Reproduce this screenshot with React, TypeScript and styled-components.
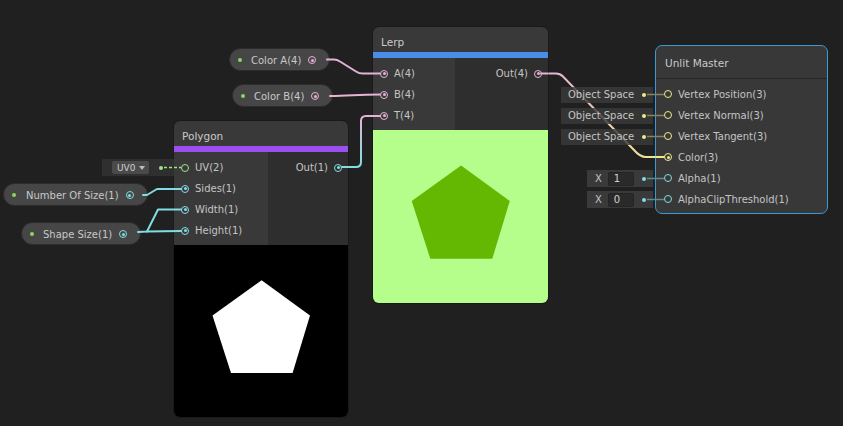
import React from 'react';
import styled, { createGlobalStyle } from 'styled-components';

const PINK = '#e6b2d6';
const CYAN = '#82dde2';
const YELLOW = '#efeb8a';
const GREEN = '#9ce57f';

const GlobalStyle = createGlobalStyle`
  html, body { margin: 0; padding: 0; background: #202020; }
  body { font-family: "DejaVu Sans", "Liberation Sans", sans-serif; }
`;

const Canvas = styled.div`
  position: relative;
  width: 843px;
  height: 426px;
  overflow: hidden;
  background: #202020;
  font-family: "DejaVu Sans", "Liberation Sans", sans-serif;
  font-size: 10px;
  color: #c4c4c4;
`;

const WireLayer = styled.svg<{ $z: number }>`
  position: absolute;
  left: 0;
  top: 0;
  width: 843px;
  height: 426px;
  pointer-events: none;
  z-index: ${(p) => p.$z};
`;

const Node = styled.div<{ $x: number; $y: number; $w: number }>`
  position: absolute;
  left: ${(p) => p.$x}px;
  top: ${(p) => p.$y}px;
  width: ${(p) => p.$w}px;
  display: flex;
  flex-direction: column;
  background: #393939;
  border-radius: 6px;
  overflow: hidden;
  box-shadow: 0 0 0 1px #1a1a1a;
  z-index: 1;
`;

const Title = styled.div`
  height: 25px;
  box-sizing: border-box;
  padding: 4px 8px 0;
  display: flex;
  align-items: center;
  font-size: 10.5px;
  color: #c9c9c9;
`;

const ColorBar = styled.div<{ $color: string }>`
  height: 6px;
  background: ${(p) => p.$color};
`;

const Ports = styled.div<{ $inWidth: number }>`
  display: grid;
  grid-template-columns: ${(p) => p.$inWidth}px 1fr;
`;

const InputColumn = styled.div`
  display: flex;
  flex-direction: column;
  padding: 5px 0 4px;
  background: #393939;
`;

const OutputColumn = styled.div`
  display: flex;
  flex-direction: column;
  padding: 5px 0 4px;
  background: #2e2e2e;
`;

const PortRow = styled.div<{ $out?: boolean }>`
  height: 21px;
  display: flex;
  align-items: center;
  gap: 6px;
  justify-content: ${(p) => (p.$out ? 'flex-end' : 'flex-start')};
  padding: ${(p) => (p.$out ? '0 6px 0 0' : '0 0 0 7px')};
  white-space: nowrap;
`;

const Port = styled.span<{ $color: string; $filled?: boolean }>`
  position: relative;
  flex: none;
  width: 8px;
  height: 8px;
  box-sizing: border-box;
  border-radius: 50%;
  border: 1.5px solid ${(p) => p.$color};
  &::after {
    content: '';
    display: ${(p) => (p.$filled ? 'block' : 'none')};
    position: absolute;
    left: 50%;
    top: 50%;
    width: 3px;
    height: 3px;
    margin: -1.5px 0 0 -1.5px;
    border-radius: 50%;
    background: ${(p) => p.$color};
  }
`;

const Preview = styled.div<{ $bg: string; $h: number }>`
  height: ${(p) => p.$h}px;
  background: ${(p) => p.$bg};
  display: flex;
  svg { width: 100%; height: 100%; display: block; }
`;

const Pill = styled.div<{ $x: number; $y: number }>`
  position: absolute;
  left: ${(p) => p.$x}px;
  top: ${(p) => p.$y}px;
  height: 23px;
  box-sizing: border-box;
  padding: 1px 13px 0 8px;
  display: flex;
  align-items: center;
  background: #464646;
  border: 1px solid #2c2c2c;
  border-radius: 11.5px;
  white-space: nowrap;
  color: #c8c8c8;
  z-index: 1;
`;

const PillDot = styled.span`
  flex: none;
  width: 4px;
  height: 4px;
  border-radius: 50%;
  background: #8ed65e;
`;

const PillLabel = styled.span<{ $gap: number }>`
  margin: 0 7px 0 ${(p) => p.$gap}px;
`;

const UvBox = styled.div`
  position: absolute;
  left: 102px;
  top: 159px;
  width: 72px;
  height: 17px;
  box-sizing: border-box;
  padding-left: 10px;
  display: flex;
  align-items: center;
  background: #2f2f2f;
  z-index: 1;
`;

const UvButton = styled.div`
  width: 37px;
  height: 13px;
  box-sizing: border-box;
  padding: 0 4px 0 5px;
  display: flex;
  align-items: center;
  justify-content: space-between;
  background: #4a4a4a;
  border-radius: 2px;
  color: #d0d0d0;
  font-size: 9px;
`;

const Caret = styled.span`
  width: 0;
  height: 0;
  border-left: 3.5px solid transparent;
  border-right: 3.5px solid transparent;
  border-top: 4px solid #bdbdbd;
`;

const SlotDot = styled.span<{ $color: string }>`
  flex: none;
  width: 4px;
  height: 4px;
  border-radius: 50%;
  background: ${(p) => p.$color};
  margin: 0 7px 0 auto;
`;

const UvDot = styled(SlotDot)`
  margin: 0 0 0 auto;
  position: relative;
  left: -11px;
`;

const MasterNode = styled.div`
  position: absolute;
  left: 655px;
  top: 45px;
  width: 173px;
  height: 169px;
  box-sizing: border-box;
  border: 1.5px solid #3a99d6;
  border-radius: 7px;
  background: #383838;
  display: flex;
  flex-direction: column;
  z-index: 1;
`;

const MasterTitle = styled.div`
  flex: none;
  height: 33px;
  box-sizing: border-box;
  padding: 2px 9px 0;
  display: flex;
  align-items: center;
  border-bottom: 1px solid #272727;
  font-size: 10.5px;
  color: #c9c9c9;
`;

const MasterRows = styled.div`
  display: flex;
  flex-direction: column;
  padding-top: 4.5px;
`;

const MasterRow = styled.div`
  height: 21px;
  display: flex;
  align-items: center;
  gap: 6px;
  padding-left: 8px;
  white-space: nowrap;
`;

const SlotColumn = styled.div`
  position: absolute;
  left: 553px;
  top: 84px;
  width: 100px;
  display: flex;
  flex-direction: column;
  z-index: 1;
`;

const SlotRow = styled.div`
  height: 21px;
  display: flex;
  align-items: center;
  justify-content: flex-end;
`;

const SpaceField = styled.div`
  width: 92px;
  height: 16px;
  box-sizing: border-box;
  padding-left: 7px;
  display: flex;
  align-items: center;
  background: rgba(59, 59, 59, 0.82);
  color: #c4c4c4;
  white-space: nowrap;
`;

const VectorField = styled.div`
  width: 66px;
  height: 17px;
  box-sizing: border-box;
  padding-left: 8px;
  display: flex;
  align-items: center;
  background: #3a3a3a;
  color: #c4c4c4;
`;

const NumberInput = styled.div`
  margin-left: 6px;
  width: 26px;
  height: 14px;
  box-sizing: border-box;
  padding-left: 5px;
  display: flex;
  align-items: center;
  background: #2a2a2a;
  border: 1px solid #242424;
  border-radius: 2px;
  color: #d2d2d2;
`;

type Row = { label: string; color: string; filled?: boolean };

function Pentagon({ fill }: { fill: string }) {
  return (
    <svg viewBox="0 0 174 173" preserveAspectRatio="none">
      <polygon points="87.6,35.5 136,71 118.6,128.8 57,128.8 38.5,71" fill={fill} />
    </svg>
  );
}

function ShaderNode(props: {
  x: number;
  y: number;
  w: number;
  title: string;
  bar: string;
  inWidth: number;
  inputs: Row[];
  outputs: Row[];
  previewBg: string;
  previewH: number;
  shape: string;
}) {
  return (
    <Node $x={props.x} $y={props.y} $w={props.w}>
      <Title>{props.title}</Title>
      <ColorBar $color={props.bar} />
      <Ports $inWidth={props.inWidth}>
        <InputColumn>
          {props.inputs.map((r) => (
            <PortRow key={r.label}>
              <Port $color={r.color} $filled={r.filled} />
              <span>{r.label}</span>
            </PortRow>
          ))}
        </InputColumn>
        <OutputColumn>
          {props.outputs.map((r) => (
            <PortRow key={r.label} $out>
              <span>{r.label}</span>
              <Port $color={r.color} $filled={r.filled} />
            </PortRow>
          ))}
        </OutputColumn>
      </Ports>
      <Preview $bg={props.previewBg} $h={props.previewH}>
        <Pentagon fill={props.shape} />
      </Preview>
    </Node>
  );
}

const pills = [
  { x: 229, y: 48, label: 'Color A(4)', color: PINK, gap: 9 },
  { x: 232, y: 84, label: 'Color B(4)', color: PINK, gap: 9 },
  { x: 3, y: 183, label: 'Number Of Size(1)', color: CYAN, gap: 10 },
  { x: 21, y: 222, label: 'Shape Size(1)', color: CYAN, gap: 9 },
];

const masterRows: Row[] = [
  { label: 'Vertex Position(3)', color: YELLOW },
  { label: 'Vertex Normal(3)', color: YELLOW },
  { label: 'Vertex Tangent(3)', color: YELLOW },
  { label: 'Color(3)', color: YELLOW, filled: true },
  { label: 'Alpha(1)', color: CYAN },
  { label: 'AlphaClipThreshold(1)', color: CYAN },
];

export default function App() {
  return (
    <>
      <GlobalStyle />
      <Canvas>
        <WireLayer $z={0} viewBox="0 0 843 426">
          <defs>
            <linearGradient id="lerpColor" gradientUnits="userSpaceOnUse" x1="548" y1="0" x2="664" y2="0">
              <stop offset="0" stopColor={PINK} />
              <stop offset="1" stopColor={YELLOW} />
            </linearGradient>
          </defs>
          <path
            d="M541,73.5 L556,73.5 Q560,73.5 563,76.5 L634,150 Q640,157 646,157 L664,157"
            fill="none"
            stroke="url(#lerpColor)"
            strokeWidth="2"
          />
        </WireLayer>

        <ShaderNode
          x={174}
          y={121}
          w={174}
          title="Polygon"
          bar="#9b4ff0"
          inWidth={94}
          inputs={[
            { label: 'UV(2)', color: GREEN },
            { label: 'Sides(1)', color: CYAN, filled: true },
            { label: 'Width(1)', color: CYAN, filled: true },
            { label: 'Height(1)', color: CYAN, filled: true },
          ]}
          outputs={[{ label: 'Out(1)', color: CYAN, filled: true }]}
          previewBg="#000000"
          previewH={172}
          shape="#ffffff"
        />

        <ShaderNode
          x={373}
          y={27}
          w={175}
          title="Lerp"
          bar="#4a8de8"
          inWidth={82}
          inputs={[
            { label: 'A(4)', color: PINK, filled: true },
            { label: 'B(4)', color: PINK, filled: true },
            { label: 'T(4)', color: PINK, filled: true },
          ]}
          outputs={[{ label: 'Out(4)', color: PINK, filled: true }]}
          previewBg="#b5fe8b"
          previewH={173}
          shape="#64b802"
        />

        {pills.map((p) => (
          <Pill key={p.label} $x={p.x} $y={p.y}>
            <PillDot />
            <PillLabel $gap={p.gap}>{p.label}</PillLabel>
            <Port $color={p.color} $filled />
          </Pill>
        ))}

        <UvBox>
          <UvButton>
            <span>UV0</span>
            <Caret />
          </UvButton>
          <UvDot $color={GREEN} />
        </UvBox>

        <SlotColumn>
          {[0, 1, 2].map((i) => (
            <SlotRow key={i}>
              <SpaceField>
                Object Space
                <SlotDot $color={YELLOW} />
              </SpaceField>
            </SlotRow>
          ))}
          <SlotRow />
          {['1', '0'].map((v) => (
            <SlotRow key={v}>
              <VectorField>
                X
                <NumberInput>{v}</NumberInput>
                <SlotDot $color={CYAN} />
              </VectorField>
            </SlotRow>
          ))}
        </SlotColumn>

        <MasterNode>
          <MasterTitle>Unlit Master</MasterTitle>
          <MasterRows>
            {masterRows.map((r) => (
              <MasterRow key={r.label}>
                <Port $color={r.color} $filled={r.filled} />
                <span>{r.label}</span>
              </MasterRow>
            ))}
          </MasterRows>
        </MasterNode>

        <WireLayer $z={3} viewBox="0 0 843 426">
          <defs>
            <linearGradient id="outToT" gradientUnits="userSpaceOnUse" x1="0" y1="167" x2="0" y2="116">
              <stop offset="0" stopColor={CYAN} />
              <stop offset="1" stopColor={PINK} />
            </linearGradient>
          </defs>
          <g fill="none" strokeWidth="2" strokeLinejoin="round" strokeLinecap="round">
            <path d="M327,59.5 L334,59.5 Q337,59.5 340,61.5 L356,71.5 Q359,73.5 363,73.5 L380,73.5" stroke={PINK} />
            <path d="M330,96 C350,96 356,94.5 380,94.5" stroke={PINK} />
            <path d="M342,167 L356,167 Q361,167 361,162 L361,121 Q361,116 366,116 L380,116" stroke="url(#outToT)" />
            <path d="M541,73.5 L548,73.5" stroke={PINK} />
            <path d="M656,157 L664,157" stroke={YELLOW} />
            <path d="M143,195 L147,195 L157,189 L181,189" stroke={CYAN} />
            <path d="M138,232 L147,231.5 L158,209.5 L181,209.5" stroke={CYAN} />
            <path d="M147,231.5 L181,231" stroke={CYAN} />
          </g>
          <path d="M164,167.5 L181,167.5" stroke={GREEN} strokeWidth="1.5" strokeDasharray="3 2" />
          <g strokeWidth="1.5">
            <path d="M647,94.5 L664,94.5" stroke="#85855f" />
            <path d="M647,115.5 L664,115.5" stroke="#85855f" />
            <path d="M647,136.5 L664,136.5" stroke="#85855f" />
            <path d="M647,178.5 L664,178.5" stroke="#5b8e92" />
            <path d="M647,199.5 L664,199.5" stroke="#5b8e92" />
          </g>
        </WireLayer>
      </Canvas>
    </>
  );
}
